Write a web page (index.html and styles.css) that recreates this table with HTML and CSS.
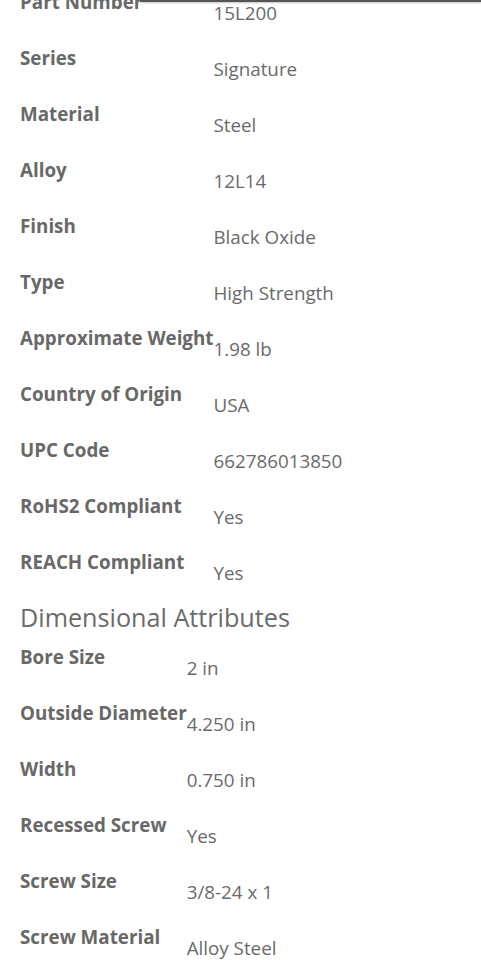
FILE: index.html
```html
<!DOCTYPE html>
<html>
<head>
<meta charset="utf-8">
<link rel="stylesheet" href="styles.css">
</head>
<body>
<div class="topline"></div>
<div class="page">
  <table class="attrs">
    <tr><td class="lbl">Part Number</td><td class="val">15L200</td></tr>
    <tr><td class="lbl">Series</td><td class="val">Signature</td></tr>
    <tr><td class="lbl">Material</td><td class="val">Steel</td></tr>
    <tr><td class="lbl">Alloy</td><td class="val">12L14</td></tr>
    <tr><td class="lbl">Finish</td><td class="val">Black Oxide</td></tr>
    <tr><td class="lbl">Type</td><td class="val">High Strength</td></tr>
    <tr><td class="lbl">Approximate Weight</td><td class="val">1.98 lb</td></tr>
    <tr><td class="lbl">Country of Origin</td><td class="val">USA</td></tr>
    <tr><td class="lbl">UPC Code</td><td class="val">662786013850</td></tr>
    <tr><td class="lbl">RoHS2 Compliant</td><td class="val">Yes</td></tr>
    <tr><td class="lbl">REACH Compliant</td><td class="val">Yes</td></tr>
  </table>
  <h2 class="section">Dimensional Attributes</h2>
  <table class="attrs">
    <tr><td class="lbl">Bore Size</td><td class="val">2 in</td></tr>
    <tr><td class="lbl">Outside Diameter</td><td class="val">4.250 in</td></tr>
    <tr><td class="lbl">Width</td><td class="val">0.750 in</td></tr>
    <tr><td class="lbl">Recessed Screw</td><td class="val">Yes</td></tr>
    <tr><td class="lbl">Screw Size</td><td class="val">3/8-24 x 1</td></tr>
    <tr><td class="lbl">Screw Material</td><td class="val">Alloy Steel</td></tr>
  </table>
</div>
</body>
</html>
```
FILE: styles.css
```css
html, body {
  margin: 0;
  padding: 0;
  background: #fff;
  overflow: hidden;
}
body {
  font-family: "Open Sans", "Liberation Sans", sans-serif;
  color: #666;
}
.topline {
  position: fixed;
  top: 0;
  left: 140px;
  right: 0;
  height: 2px;
  background: #555;
  box-shadow: 0 1px 2px rgba(0,0,0,0.25);
  z-index: 2;
}
.page {
  padding: 0 20px;
  margin-top: -14px;
}
.attrs {
  border-collapse: collapse;
  border-spacing: 0;
}
.attrs tr {
  height: 56px;
}
.attrs td {
  padding: 0;
  vertical-align: top;
  font-size: 18.8px;
  line-height: 24px;
  white-space: nowrap;
}
.attrs .lbl {
  font-weight: 700;
  color: #686868;
  padding-top: 4px;
}
.attrs .val {
  font-weight: 400;
  color: #6a6a6a;
  padding-top: 15px;
}
.section {
  margin: 0 0 9px 0;
  font-size: 25.2px;
  line-height: 30px;
  font-weight: 400;
  color: #6a6a6a;
}
```
